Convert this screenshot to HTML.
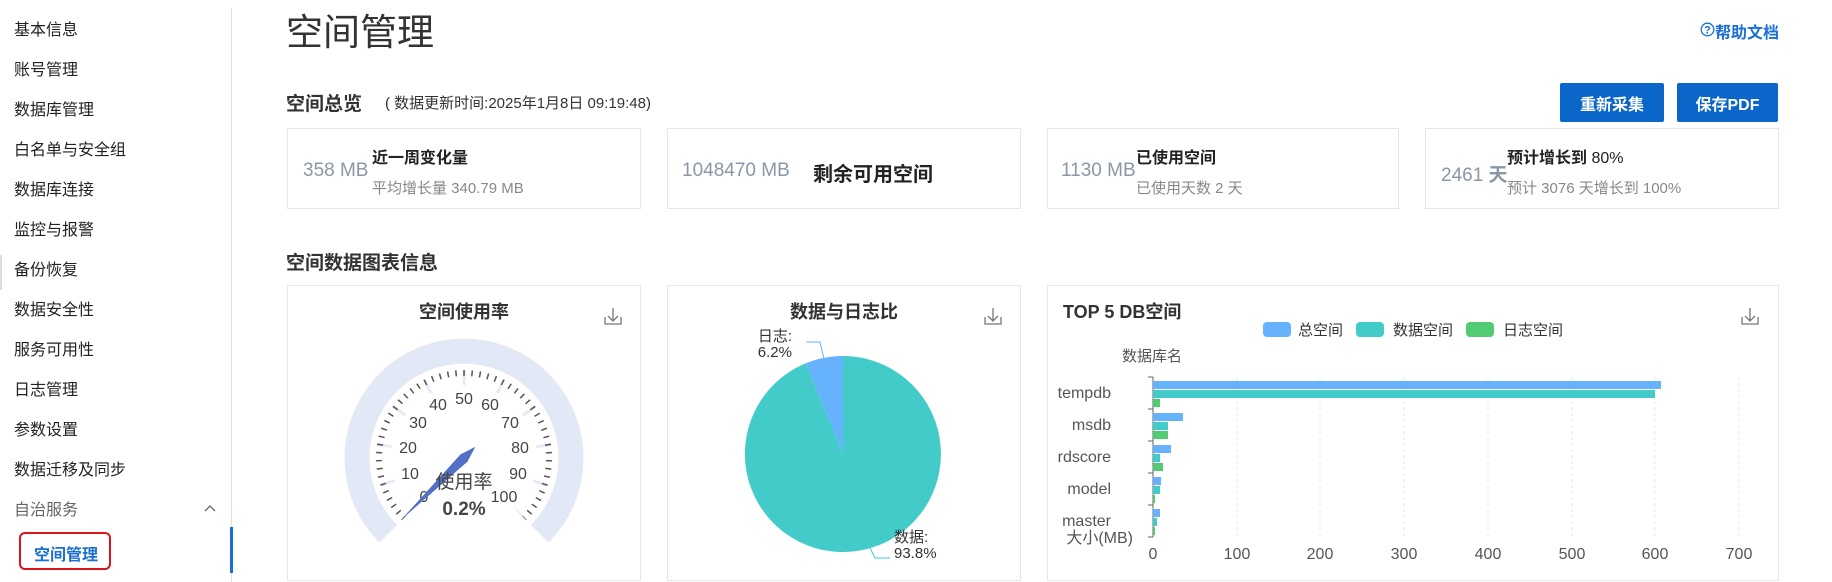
<!DOCTYPE html>
<html><head><meta charset="utf-8"><style>
*{margin:0;padding:0;box-sizing:border-box}
body{width:1832px;height:582px;overflow:hidden;background:#fff;font-family:"Liberation Sans","Noto Sans CJK SC",sans-serif;color:#222;position:relative}
.a{position:absolute;white-space:nowrap}
.nav{left:14px;font-size:16px;color:#222;line-height:20px}
.card{position:absolute;border:1px solid #e6e6e6;background:#fff}
.val{color:#8a97a6;font-size:19px}
.lb{font-size:16px;font-weight:bold;color:#222}
.sub{font-size:15px;color:#888}
.btn{position:absolute;top:83px;height:39px;background:#0a66c8;color:#fff;font-size:16px;font-weight:bold;display:flex;align-items:center;justify-content:center;border-radius:2px}
</style></head><body>
<div class="a nav" style="top:21px">基本信息</div>
<div class="a nav" style="top:61px">账号管理</div>
<div class="a nav" style="top:101px">数据库管理</div>
<div class="a nav" style="top:141px">白名单与安全组</div>
<div class="a nav" style="top:181px">数据库连接</div>
<div class="a nav" style="top:221px">监控与报警</div>
<div class="a nav" style="top:261px">备份恢复</div>
<div class="a nav" style="top:301px">数据安全性</div>
<div class="a nav" style="top:341px">服务可用性</div>
<div class="a nav" style="top:381px">日志管理</div>
<div class="a nav" style="top:421px">参数设置</div>
<div class="a nav" style="top:461px">数据迁移及同步</div>
<div class="a nav" style="top:501px;color:#666">自治服务</div>
<svg class="a" style="left:203px;top:504px" width="14" height="10"><path d="M2 7 L7 2 L12 7" fill="none" stroke="#666" stroke-width="1.3"/></svg>
<div class="a" style="left:19px;top:532px;width:92px;height:38px;border:2.5px solid #d9141c;border-radius:6px"></div>
<div class="a" style="left:34px;top:541px;font-size:16px;color:#1a6fd6;font-weight:bold">空间管理</div>
<div class="a" style="left:231px;top:8px;width:1px;height:574px;background:#ddd"></div>
<div class="a" style="left:230px;top:527px;width:3px;height:46px;background:#1a6fd6"></div>
<div class="a" style="left:0;top:255px;width:2px;height:35px;background:#ddd"></div>

<div class="a" style="left:286px;top:2px;font-size:37px;color:#333">空间管理</div>
<svg class="a" style="left:1700px;top:22px" width="15" height="15"><circle cx="7.5" cy="7.5" r="6.3" fill="none" stroke="#1a6fd6" stroke-width="1.3"/><text x="7.5" y="11.5" font-size="11" fill="#1a6fd6" text-anchor="middle" font-weight="bold">?</text></svg>
<div class="a" style="left:1715px;top:19px;font-size:16px;color:#1a6fd6;font-weight:bold">帮助文档</div>
<div class="a" style="left:286px;top:89px;font-size:19px;font-weight:bold;color:#333">空间总览</div>
<div class="a" style="left:385px;top:92px;font-size:15px;color:#333">( 数据更新时间:2025年1月8日 09:19:48)</div>
<div class="btn" style="left:1560px;width:104px">重新采集</div>
<div class="btn" style="left:1677px;width:101px">保存PDF</div>

<div class="card" style="left:287px;top:128px;width:354px;height:81px"></div>
<div class="card" style="left:667px;top:128px;width:354px;height:81px"></div>
<div class="card" style="left:1047px;top:128px;width:352px;height:81px"></div>
<div class="card" style="left:1425px;top:128px;width:354px;height:81px"></div>
<div class="a val" style="left:303px;top:160px">358 MB</div>
<div class="a lb" style="left:372px;top:144px">近一周变化量</div>
<div class="a sub" style="left:372px;top:177px">平均增长量 340.79 MB</div>
<div class="a val" style="left:682px;top:160px">1048470 MB</div>
<div class="a" style="left:813px;top:158px;font-size:20px;font-weight:bold;color:#222">剩余可用空间</div>
<div class="a val" style="left:1061px;top:160px">1130 MB</div>
<div class="a lb" style="left:1136px;top:144px">已使用空间</div>
<div class="a sub" style="left:1136px;top:177px">已使用天数 2 天</div>
<div class="a val" style="left:1441px;top:160px">2461 <b>天</b></div>
<div class="a lb" style="left:1507px;top:144px">预计增长到 <span style="font-weight:normal">80%</span></div>
<div class="a sub" style="left:1507px;top:177px">预计 3076 天增长到 100%</div>

<div class="a" style="left:286px;top:248px;font-size:19px;font-weight:bold;color:#333">空间数据图表信息</div>

<div class="card" style="left:287px;top:285px;width:354px;height:296px"></div>
<div class="card" style="left:667px;top:285px;width:354px;height:296px"></div>
<div class="card" style="left:1047px;top:285px;width:732px;height:296px"></div>

<svg class="a" style="left:0;top:0" width="1832" height="582">
<defs><g id="dl"><path d="M-8 -6 V1 H8 V-6" fill="none" stroke="#777" stroke-width="1.3"/><path d="M0 -15 V-2 M-5 -7 L0 -2 L5 -7" fill="none" stroke="#777" stroke-width="1.3"/></g></defs>
<use href="#dl" x="613" y="323"/><use href="#dl" x="993" y="323"/><use href="#dl" x="1750" y="323"/>
<path d="M388.3 533.7 A107 107 0 1 1 539.7 533.7" fill="none" stroke="#e2e8f5" stroke-width="25"/>
<path d="M407.4 514.6 A80 80 0 1 1 520.6 514.6" fill="none" stroke="#e4eaf6" stroke-width="14" stroke-dasharray="3 34.7" stroke-dashoffset="1.5"/>
<path d="M403.9 518.1 A85 85 0 1 1 524.1 518.1" fill="none" stroke="#555" stroke-width="6" stroke-dasharray="1.5 6.51" stroke-dashoffset="0.75"/>
<g font-size="16" fill="#444" text-anchor="middle" dominant-baseline="middle">
<text x="424" y="498">0</text><text x="410" y="475">10</text><text x="408" y="449">20</text><text x="418" y="424">30</text><text x="438" y="406">40</text><text x="464" y="400">50</text><text x="490" y="406">60</text><text x="510" y="424">70</text><text x="520" y="449">80</text><text x="518" y="475">90</text><text x="504" y="498">100</text>
</g>
<g transform="translate(464,458) rotate(135.5)"><polygon points="-16,0 0,-5 88,0 0,5" fill="#5470c6"/></g>
<text x="464" y="488" font-size="19" fill="#464646" text-anchor="middle">使用率</text>
<text x="464" y="515" font-size="19" font-weight="bold" fill="#464646" text-anchor="middle">0.2%</text>
<text x="464" y="318" font-size="18" font-weight="bold" fill="#333" text-anchor="middle">空间使用率</text>
<text x="844" y="318" font-size="18" font-weight="bold" fill="#333" text-anchor="middle">数据与日志比</text>
<path d="M843 454 L843 356 A98 98 0 1 1 805.8 363.3 Z" fill="#43cbca"/>
<path d="M843 454 L805.8 363.3 A98 98 0 0 1 843 356 Z" fill="#67b2fc"/>
<polyline points="824,359 820,342 806,342" fill="none" stroke="#67b2fc"/>
<polyline points="870,548 875,558 890,558" fill="none" stroke="#43cbca"/>
<g font-size="15" fill="#333"><text x="792" y="341" text-anchor="end">日志:</text><text x="792" y="357" text-anchor="end">6.2%</text>
<text x="894" y="542">数据:</text><text x="894" y="558">93.8%</text></g>
<text x="1063" y="318" font-size="18" font-weight="bold" fill="#333">TOP 5 DB空间</text>
<rect x="1263" y="322" width="28" height="15" rx="4" fill="#67b2fc"/><text x="1298" y="335" font-size="15" fill="#333">总空间</text>
<rect x="1356" y="322" width="28" height="15" rx="4" fill="#43cbca"/><text x="1393" y="335" font-size="15" fill="#333">数据空间</text>
<rect x="1466" y="322" width="28" height="15" rx="4" fill="#53cb75"/><text x="1503" y="335" font-size="15" fill="#333">日志空间</text>
<text x="1122" y="361" font-size="15" fill="#555">数据库名</text>
<g stroke="#e6e8f0" stroke-dasharray="3 3"><line x1="1237" y1="377" x2="1237" y2="537"/><line x1="1320" y1="377" x2="1320" y2="537"/><line x1="1404" y1="377" x2="1404" y2="537"/><line x1="1488" y1="377" x2="1488" y2="537"/><line x1="1572" y1="377" x2="1572" y2="537"/><line x1="1655" y1="377" x2="1655" y2="537"/><line x1="1739" y1="377" x2="1739" y2="537"/></g>
<g stroke="#666"><line x1="1153" y1="377" x2="1153" y2="537"/><line x1="1148" y1="377" x2="1153" y2="377"/><line x1="1148" y1="409" x2="1153" y2="409"/><line x1="1148" y1="441" x2="1153" y2="441"/><line x1="1148" y1="473" x2="1153" y2="473"/><line x1="1148" y1="505" x2="1153" y2="505"/><line x1="1148" y1="537" x2="1153" y2="537"/></g>
<g fill="#67b2fc"><rect x="1153" y="381" width="508" height="8"/><rect x="1153" y="413" width="30" height="8"/><rect x="1153" y="445" width="18" height="8"/><rect x="1153" y="477" width="8" height="8"/><rect x="1153" y="509" width="7" height="8"/></g>
<g fill="#43cbca"><rect x="1153" y="390" width="502" height="8"/><rect x="1153" y="422" width="15" height="8"/><rect x="1153" y="454" width="7" height="8"/><rect x="1153" y="486" width="7" height="8"/><rect x="1153" y="518" width="4" height="8"/></g>
<g fill="#53cb75"><rect x="1153" y="399" width="7" height="8"/><rect x="1153" y="431" width="15" height="8"/><rect x="1153" y="463" width="10" height="8"/><rect x="1153" y="495" width="2" height="8"/><rect x="1153" y="527" width="2" height="8"/></g>
<g font-size="16" fill="#555" text-anchor="end"><text x="1111" y="398">tempdb</text><text x="1111" y="430">msdb</text><text x="1111" y="462">rdscore</text><text x="1111" y="494">model</text><text x="1111" y="526">master</text><text x="1133" y="543">大小(MB)</text></g>
<g font-size="16" fill="#555" text-anchor="middle"><text x="1153" y="559">0</text><text x="1237" y="559">100</text><text x="1320" y="559">200</text><text x="1404" y="559">300</text><text x="1488" y="559">400</text><text x="1572" y="559">500</text><text x="1655" y="559">600</text><text x="1739" y="559">700</text></g>
</svg>
</body></html>
